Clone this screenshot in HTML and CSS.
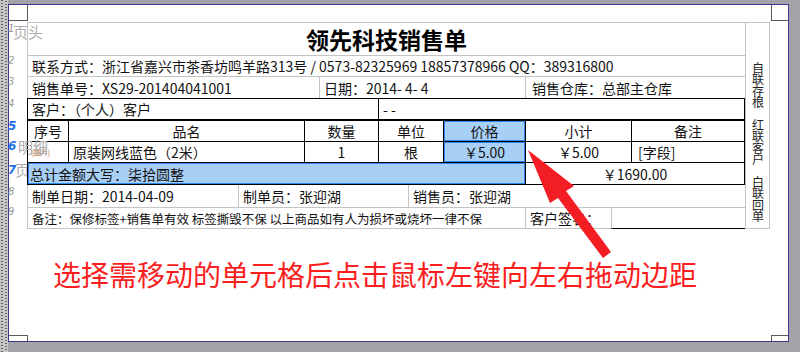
FILE: index.html
```html
<!DOCTYPE html>
<html lang="zh-CN">
<head>
    <meta charset="UTF-8">
    <title>领先科技销售单 - 报表设计</title>
    <link rel="stylesheet" href="styles.css">
</head>
<body>

<div class="ruler"></div>

<div class="desk">
    <div class="page">
        <!-- cantos da margem -->
        <span class="corner tl"></span>
        <span class="corner tr"></span>
        <span class="corner bl"></span>
        <span class="corner br"></span>

        <!-- numeros das linhas e nomes das faixas -->
        <span class="line-no" style="top:18px">1</span>
        <span class="line-no" style="top:50px">2</span>
        <span class="line-no" style="top:71px">3</span>
        <span class="line-no" style="top:93px">4</span>
        <span class="line-no on" style="top:115px">5</span>
        <span class="line-no on" style="top:135px">6</span>
        <span class="line-no on" style="top:159px">7</span>
        <span class="line-no" style="top:181px">8</span>
        <span class="line-no" style="top:201px">9</span>
        <span class="band-name head-name">页头</span>
        <span class="band-name detail-name">明细</span>
        <span class="band-name foot-name">页脚</span>

        <div class="sheet">
            <div class="form">
                <div class="title-band">
                    <h1>领先科技销售单</h1>
                </div>

                <div class="row gray contact">
                    <div class="cell">联系方式：浙江省嘉兴市茶香坊鸣羊路313号 / 0573-82325969 18857378966 QQ：389316800</div>
                </div>

                <div class="row gray order">
                    <div class="cell c-order">销售单号：XS29-201404041001</div>
                    <div class="cell c-date">日期：2014- 4- 4</div>
                    <div class="cell grow c-store">销售仓库：总部主仓库</div>
                </div>

                <div class="block">
                    <div class="row cust">
                        <div class="cell c-cust">客户：（个人）客户</div>
                        <div class="cell grow">- -</div>
                    </div>
                    <div class="row head">
                        <div class="cell center c-no">序号</div>
                        <div class="cell center c-name">品名</div>
                        <div class="cell center c-qty">数量</div>
                        <div class="cell center c-unit">单位</div>
                        <div class="cell center c-price selected">价格</div>
                        <div class="cell center c-sub">小计</div>
                        <div class="cell center grow">备注</div>
                    </div>
                    <div class="row item">
                        <div class="cell c-no"><span class="thumb">[图片]</span></div>
                        <div class="cell c-name">原装网线蓝色（2米）</div>
                        <div class="cell center c-qty">1</div>
                        <div class="cell center c-unit">根</div>
                        <div class="cell center c-price selected">￥5.00</div>
                        <div class="cell center c-sub">￥5.00</div>
                        <div class="cell grow c-memo">[字段]</div>
                    </div>
                    <div class="row total">
                        <div class="cell c-words selected">总计金额大写：柒拾圆整</div>
                        <div class="cell center grow">￥1690.00</div>
                    </div>
                </div>

                <div class="row gray maker">
                    <div class="cell c-made">制单日期：2014-04-09</div>
                    <div class="cell c-maker">制单员：张迎湖</div>
                    <div class="cell grow">销售员：张迎湖</div>
                </div>

                <div class="row gray note">
                    <div class="cell c-note">备注：保修标签+销售单有效 标签撕毁不保 以上商品如有人为损坏或烧坏一律不保</div>
                    <div class="cell c-sign">客户签名：</div>
                    <div class="cell grow sign-line"></div>
                </div>
            </div>

            <div class="side">
                <span>自联存根</span>
                <span>红联客户</span>
                <span>白联回单</span>
            </div>
        </div>

        <p class="tip">选择需移动的单元格后点击鼠标左键向左右拖动边距</p>

        <svg class="arrow" width="100" height="120" viewBox="0 0 100 120">
            <polygon points="8,5 54,41 46,46 91,107 83,113 38,53 30,58" fill="#f31d24"/>
        </svg>
    </div>
</div>

</body>
</html>
```

FILE: styles.css
```css
* {
    margin: 0;
    padding: 0;
    box-sizing: border-box;
}

body {
    width: 800px;
    height: 352px;
    overflow: hidden;
    display: flex;
    background: #a3a3a7;
    font-family: "Noto Sans CJK SC", sans-serif;
    font-size: 14px;
    color: #111;
}

.ruler {
    width: 8px;
    height: 100%;
    background-color: #c6c6c6;
    background-image:
        repeating-linear-gradient(to bottom, #5c5c5c 0 1px, transparent 1px 3px),
        repeating-linear-gradient(to bottom, transparent 0 1px, #6a6a6a 1px 2px, transparent 2px 3px);
    background-size: 2px 100%, 2px 100%;
    background-position: 1px 0, 5px 0;
    background-repeat: no-repeat;
}

.desk {
    flex: 1;
    padding: 4px 11px 10px 0;
}

.page {
    position: relative;
    height: 100%;
    background: #fff;
    border: 1px solid #3b3b93;
    padding: 17px 0 0 18px;
}

/* cantos */
.corner {
    position: absolute;
    border: 0 solid #5a5a5a;
}

.corner.tl {
    left: 0;
    top: 0;
    width: 19px;
    height: 16px;
    border-right-width: 1px;
    border-bottom-width: 1px;
}

.corner.tr {
    right: 0;
    top: 0;
    width: 17px;
    height: 16px;
    border-left-width: 1px;
    border-bottom-width: 1px;
}

.corner.bl {
    left: 0;
    bottom: 0;
    width: 19px;
    height: 6px;
    border-right-width: 1px;
    border-top-width: 1px;
}

.corner.br {
    right: 0;
    bottom: 0;
    width: 17px;
    height: 6px;
    border-left-width: 1px;
    border-top-width: 1px;
}

.line-no {
    position: absolute;
    left: -1px;
    font-family: "DejaVu Sans", sans-serif;
    font-size: 10px;
    line-height: 11px;
    font-style: italic;
    color: #9a9a9a;
}

.line-no.on {
    color: #1f6fe6;
    font-weight: bold;
    font-size: 12px;
    line-height: 13px;
}

.band-name {
    position: absolute;
    font-size: 15px;
    line-height: 16px;
    color: #ababab;
}

.head-name {
    left: 4px;
    top: 19px;
}

.detail-name {
    left: 9px;
    top: 134px;
    z-index: 2;
}

.foot-name {
    left: 6px;
    top: 157px;
}

/* folha do relatorio */
.sheet {
    position: relative;
    z-index: 1;
    display: flex;
}

.form {
    width: 718px;
    border-top: 1px solid #c4c4c4;
}

.title-band {
    height: 32px;
    border-left: 1px solid #c4c4c4;
}

h1 {
    font-size: 23px;
    line-height: 32px;
    font-weight: bold;
    text-align: center;
    color: #000;
}

.row {
    display: flex;
}

.cell {
    display: flex;
    align-items: center;
    flex: none;
    padding-left: 4px;
    white-space: nowrap;
}

.cell + .cell {
    border-left: 1px solid #c4c4c4;
}

.cell.grow {
    flex: 1;
}

.cell.center {
    justify-content: center;
    padding-left: 0;
}

.row.gray {
    border-left: 1px solid #c4c4c4;
    border-top: 1px solid #c4c4c4;
}

.contact {
    height: 21px;
}

.order {
    height: 22px;
}

.c-order {
    width: 291px;
}

.c-date {
    width: 206px;
}

.c-store {
    padding-left: 6px;
}

/* bloco com bordas pretas */
.block {
    border: 1px solid #000;
    width: 718px;
    margin-right: 1px;
}

.block .cell + .cell {
    border-left-color: #000;
}

.block .row + .row {
    border-top: 1px solid #000;
}

.cust {
    height: 20px;
}

.c-cust {
    width: 350px;
}

.row.head {
    height: 22px;
    border-top-width: 2px !important;
}

.item {
    height: 21px;
}

.total {
    height: 22px;
}

.c-no {
    width: 40px;
}

.c-name {
    width: 236px;
}

.c-qty {
    width: 74px;
}

.c-unit {
    width: 65px;
}

.c-price {
    width: 82px;
}

.c-sub {
    width: 106px;
}

.c-memo {
    padding-left: 6px;
}

.c-words {
    width: 497px;
    padding-left: 2px;
}

.selected {
    background: #a8cff5;
    box-shadow: inset 0 0 0 1px #2f88ee;
}

.thumb {
    font-size: 7px;
    color: #b0702c;
    letter-spacing: -0.3px;
}

.maker {
    height: 22px;
    border-top: 0 !important;
}

.c-made {
    width: 210px;
}

.c-maker {
    width: 170px;
}

.note {
    height: 22px;
    border-bottom: 1px solid #c4c4c4;
    font-size: 12.5px;
}

.c-note {
    width: 497px;
}

.c-sign {
    width: 86px;
    font-size: 14px;
}

.sign-line {
    border-bottom: 1px solid #000;
    margin-bottom: -1px;
}

.side {
    width: 25px;
    height: 207px;
    border: 1px solid #c4c4c4;
    display: flex;
    flex-direction: column;
    align-items: center;
    gap: 11px;
    padding-top: 39px;
}

.side span {
    writing-mode: vertical-rl;
    font-size: 12px;
    line-height: 12px;
    letter-spacing: -0.5px;
    color: #222;
}

.tip {
    margin: 29px 0 0 26px;
    font-size: 28px;
    line-height: 32px;
    color: #fa1e1e;
    white-space: nowrap;
}

.arrow {
    position: absolute;
    left: 511px;
    top: 140px;
    z-index: 3;
}
```
